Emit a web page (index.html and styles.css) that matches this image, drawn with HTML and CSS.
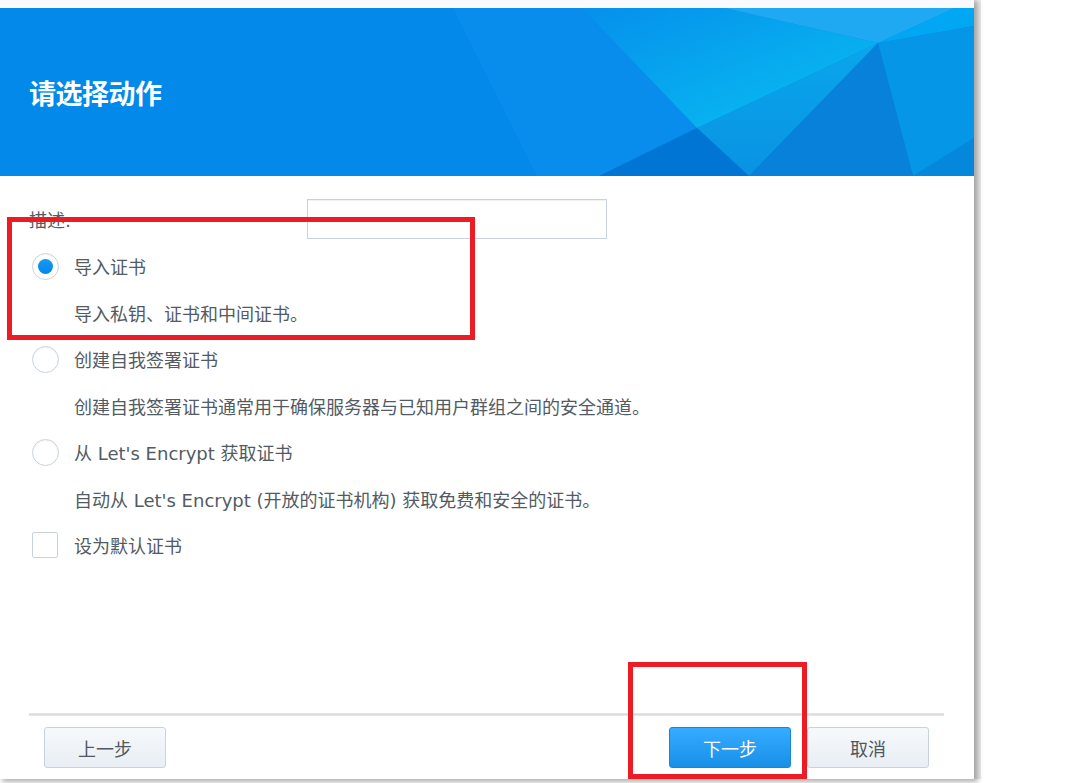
FILE: index.html
```html
<!DOCTYPE html>
<html lang="zh-CN">
<head>
<meta charset="utf-8">
<title>请选择动作</title>
<link rel="stylesheet" href="styles.css">
</head>
<body>
<div class="dialog">
  <div class="topstrip"></div>
  <div class="banner">
    <svg class="banner-art" viewBox="0 0 974 168" preserveAspectRatio="none" aria-hidden="true">
      <defs>
        <linearGradient id="glow" x1="0" y1="0" x2="1" y2="1">
          <stop offset="0" stop-color="#0590ec"/>
          <stop offset="0.75" stop-color="#08b4f0"/>
          <stop offset="1" stop-color="#0cbcf0"/>
        </linearGradient>
        <linearGradient id="mid" x1="0" y1="0" x2="0" y2="1">
          <stop offset="0" stop-color="#0aa6ec"/>
          <stop offset="1" stop-color="#0993e2"/>
        </linearGradient>
      </defs>
      <rect width="974" height="168" fill="#0389ea"/>
      <polygon points="453,0 582,0 697,120 599,168 537,168" fill="#098ded"/>
      <polygon points="582,0 725,0 878,35 697,120" fill="url(#glow)"/>
      <polygon points="725,0 955,0 878,35" fill="#1fa9f2"/>
      <polygon points="955,0 974,0 974,18 878,35" fill="#02a7f4"/>
      <polygon points="878,35 974,18 974,130 913,168" fill="#0596e7"/>
      <polygon points="974,130 974,168 913,168" fill="#0588dc"/>
      <polygon points="697,120 878,35 749,168" fill="url(#mid)"/>
      <polygon points="878,35 749,168 913,168" fill="#0781da"/>
      <polygon points="697,120 599,168 749,168" fill="#0175d4"/>
    </svg>
    <h1 class="title">请选择动作</h1>
  </div>

  <div class="content">
    <div class="field-row">
      <span class="field-label">描述:</span>
      <input class="text-input" type="text">
    </div>
    <div class="line">
      <span class="radio checked"></span>
      <span class="opt-label">导入证书</span>
    </div>
    <div class="line desc">导入私钥、证书和中间证书。</div>
    <div class="line">
      <span class="radio"></span>
      <span class="opt-label">创建自我签署证书</span>
    </div>
    <div class="line desc">创建自我签署证书通常用于确保服务器与已知用户群组之间的安全通道。</div>
    <div class="line">
      <span class="radio"></span>
      <span class="opt-label">从 Let's Encrypt 获取证书</span>
    </div>
    <div class="line desc">自动从 Let's Encrypt (开放的证书机构) 获取免费和安全的证书。</div>
    <div class="line">
      <span class="checkbox"></span>
      <span class="opt-label">设为默认证书</span>
    </div>
  </div>

  <div class="footer">
    <div class="separator"></div>
    <div class="buttons">
      <button class="btn">上一步</button>
      <div class="spacer"></div>
      <button class="btn primary">下一步</button>
      <button class="btn">取消</button>
    </div>
  </div>
</div>

<div class="mark mark-options"></div>
<div class="mark mark-next"></div>
</body>
</html>
```

FILE: styles.css
```css
* { box-sizing: border-box; }

html, body {
  margin: 0;
  padding: 0;
  background: #ffffff;
  width: 1087px;
  height: 783px;
  overflow: hidden;
}

body {
  font-family: "DejaVu Sans", "Noto Sans CJK SC", sans-serif;
  color: #525b64;
  position: relative;
}

.dialog {
  width: 974px;
  height: 779px;
  background: #ffffff;
  display: flex;
  flex-direction: column;
  box-shadow: 3px 2px 5px 1px rgba(0, 0, 0, 0.3), 7px 0 0 0 #ececec;
}

.topstrip {
  height: 8px;
  background: #f8fafd;
}

.banner {
  position: relative;
  height: 168px;
  display: flex;
  align-items: center;
  padding-left: 29px;
  overflow: hidden;
}

.banner-art {
  position: absolute;
  left: 0;
  top: 0;
  width: 100%;
  height: 100%;
}

.title {
  position: relative;
  margin: 0;
  font-family: "Noto Sans CJK SC", sans-serif;
  font-weight: 700;
  font-size: 27px;
  letter-spacing: -0.5px;
  color: #ffffff;
  line-height: 1;
  margin-top: 0;
}

.content {
  flex: 1;
  padding: 23px 29px 0 29px;
  display: flex;
  flex-direction: column;
}

.field-row {
  display: flex;
  align-items: center;
  height: 40px;
  margin-bottom: 14px;
}

.field-label {
  width: 278px;
  font-size: 18px;
  line-height: 26px;
  margin-top: 4px;
}

.text-input {
  width: 300px;
  height: 40px;
  border: 1px solid #c8d2dc;
  box-shadow: inset 0 1px 1px rgba(0, 0, 0, 0.06);
  border-radius: 0;
  outline: none;
  background: #ffffff;
}

.line {
  display: flex;
  align-items: center;
  height: 26px;
  margin-bottom: 20.5px;
  font-size: 18px;
  white-space: nowrap;
}

.line.desc {
  padding-left: 45px;
}

.radio {
  width: 27px;
  height: 27px;
  margin-left: 3px;
  margin-right: 15px;
  border-radius: 50%;
  border: 1.5px solid #c9d3dd;
  background: #ffffff;
  box-shadow: inset 0 1px 2px rgba(0, 0, 0, 0.05);
  display: flex;
  align-items: center;
  justify-content: center;
  flex: none;
}

.radio.checked::after {
  content: "";
  width: 15px;
  height: 15px;
  border-radius: 50%;
  background: linear-gradient(#1799f5, #0586ea);
}

.checkbox {
  width: 26px;
  height: 26px;
  margin-left: 3px;
  margin-right: 16px;
  border: 1.5px solid #c9d3dd;
  border-radius: 2px;
  background: #ffffff;
  flex: none;
}

.footer {
  height: 66px;
  display: flex;
  flex-direction: column;
}

.separator {
  margin: 0 30px 0 29px;
  height: 3px;
  background: linear-gradient(#e9e9e9, #d9d9d9 60%, #f2f2f2);
}

.buttons {
  display: flex;
  align-items: flex-start;
  padding: 11px 45px 0 44px;
  gap: 16px;
}

.spacer { flex: 1; }

.btn {
  width: 122px;
  height: 41px;
  border: 1px solid #c9d3dd;
  border-radius: 3px;
  background: linear-gradient(#f6f9fc, #e8eef4);
  font-family: "Noto Sans CJK SC", sans-serif;
  font-size: 18px;
  color: #4f5860;
  padding: 0;
  cursor: pointer;
}

.btn.primary {
  border-color: #1a86d8;
  background: linear-gradient(#35acff, #1890e8);
  color: #ffffff;
}

.mark {
  position: absolute;
  border: 5px solid #ed1c24;
}

.mark-options {
  left: 7px;
  top: 217px;
  width: 468px;
  height: 123px;
}

.mark-next {
  left: 628px;
  top: 662px;
  width: 179px;
  height: 117px;
}
```
